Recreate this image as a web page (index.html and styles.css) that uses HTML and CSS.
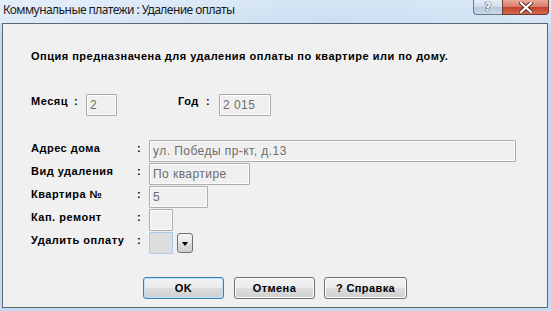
FILE: index.html
```html
<!DOCTYPE html>
<html lang="ru">

<head>
    <meta charset="UTF-8">
    <title>Коммунальные платежи : Удаление оплаты</title>
    <link rel="stylesheet" href="styles.css">
</head>

<body>
    <div class="window">
        <div class="titlebar">
            <span class="title">Коммунальные платежи : Удаление оплаты</span>
            <div class="caption-buttons">
                <span class="cap-btn help">?</span>
                <span class="cap-btn close">
                    <svg width="14" height="11" viewBox="0 0 14 11">
                        <path d="M2 1 L12 10 M12 1 L2 10" stroke="#5a2a20" stroke-width="4" stroke-linecap="square" fill="none"/>
                        <path d="M2 1 L12 10 M12 1 L2 10" stroke="#fff" stroke-width="2.2" stroke-linecap="square" fill="none"/>
                    </svg>
                </span>
            </div>
        </div>

        <div class="client">
            <p class="intro">Опция предназначена для удаления оплаты по квартире или по дому.</p>

            <div class="period">
                <span class="lbl month-lbl">Месяц</span>
                <span class="lbl colon month-colon">:</span>
                <div class="field month-field">2</div>
                <span class="lbl year-lbl">Год</span>
                <span class="lbl colon year-colon">:</span>
                <div class="field year-field">2 015</div>
            </div>

            <div class="fields">
                <span class="lbl">Адрес дома</span>
                <span class="lbl colon">:</span>
                <div class="field address-field">ул. Победы пр-кт, д.13</div>

                <span class="lbl">Вид удаления</span>
                <span class="lbl colon">:</span>
                <div class="field kind-field">По квартире</div>

                <span class="lbl">Квартира №</span>
                <span class="lbl colon">:</span>
                <div class="field flat-field">5</div>

                <span class="lbl">Кап. ремонт</span>
                <span class="lbl colon">:</span>
                <div class="field small-field"></div>

                <span class="lbl">Удалить оплату</span>
                <span class="lbl colon">:</span>
                <div class="combo">
                    <div class="field small-field focused"></div>
                    <span class="drop-btn"><span class="arrow"></span></span>
                </div>
            </div>

            <div class="actions">
                <button class="btn default">OK</button>
                <button class="btn">Отмена</button>
                <button class="btn help-btn">? Справка</button>
            </div>
        </div>
    </div>
</body>

</html>
```

FILE: styles.css
```css
* {
    margin: 0;
    padding: 0;
    box-sizing: border-box;
}

body {
    width: 551px;
    height: 311px;
    overflow: hidden;
    font-family: "Liberation Sans", Arial, sans-serif;
}

.window {
    width: 551px;
    height: 311px;
    padding: 0 3px 3px 2px;
    display: flex;
    flex-direction: column;
    background: linear-gradient(to bottom, #dbe8f6 0, #c3d8ef 40px, #c6dbf1 100%);
}

.titlebar {
    height: 23px;
    display: flex;
    justify-content: space-between;
    align-items: flex-start;
    background: linear-gradient(to right, rgba(235, 243, 252, .6), rgba(190, 215, 240, .2) 60%, rgba(220, 235, 250, .5));
    margin: 0 -3px 0 -2px;
    padding-left: 3px;
}

.title {
    font-family: "Noto Sans", "Open Sans", sans-serif;
    font-size: 12px;
    letter-spacing: -0.55px;
    line-height: 16px;
    margin-top: 2px;
    color: #1b1b1b;
}

.caption-buttons {
    display: flex;
    margin-right: 2px;
}

.cap-btn {
    height: 15px;
    display: flex;
    align-items: center;
    justify-content: center;
    border: 1px solid #6a7a8e;
    border-top: none;
}

.help {
    width: 29px;
    border-radius: 0 0 0 4px;
    border-right: none;
    background: linear-gradient(to bottom, #e4ecf5 0, #cfdbe8 50%, #b7c8da 51%, #c9d9ea 100%);
    color: #fff;
    font-family: "DejaVu Sans", sans-serif;
    font-weight: bold;
    font-size: 12px;
    line-height: 12px;
    text-shadow: 0 0 1px #3b4a5c, 0 0 1px #3b4a5c, 0 0 1px #3b4a5c;
}

.close {
    width: 47px;
    border-radius: 0 0 4px 0;
    border-color: #6e3a30;
    background: linear-gradient(to bottom, #e9a99a 0, #d77a66 50%, #c2412a 51%, #d46b4f 100%);
}

.client {
    flex: 1;
    background: #f0f0f0;
    border: 1px solid #5e6670;
    padding: 26px 0 0 28px;
    font-size: 11px;
    font-weight: bold;
    letter-spacing: 0.5px;
    color: #000;
}

.intro {
    line-height: 13px;
}

.lbl {
    line-height: 13px;
    padding-top: 1px;
    white-space: nowrap;
}

.period {
    display: flex;
    margin-top: 31px;
    height: 22px;
}

.month-lbl {
    width: 43px;
}

.month-colon {
    width: 12px;
}

.year-lbl {
    width: 28px;
    margin-left: 61px;
}

.year-colon {
    width: 13px;
}

.field {
    height: 22px;
    border: 1px solid #acacac;
    box-shadow: inset 0 0 0 1px #fbfbfb;
    background: #f0f0f0;
    color: #6d6d6d;
    font-weight: normal;
    font-size: 12px;
    letter-spacing: 0.45px;
    line-height: 14px;
    padding: 3px 0 0 3px;
    border-radius: 1px;
}

.month-field {
    width: 31px;
}

.year-field {
    width: 52px;
}

.fields {
    display: grid;
    grid-template-columns: 106px 12px 1fr;
    grid-auto-rows: 22px;
    row-gap: 1px;
    margin-top: 24px;
}

.fields .lbl {
    padding-top: 2px;
}

.address-field {
    width: 367px;
}

.kind-field {
    width: 101px;
}

.flat-field {
    width: 59px;
}

.small-field {
    width: 24px;
}

.combo {
    display: flex;
    align-items: center;
    gap: 4px;
}

.focused {
    background: #dddddd;
    border-color: #a9c9ea;
    box-shadow: none;
}

.drop-btn {
    width: 16px;
    height: 20px;
    border: 1px solid #707070;
    border-radius: 3px;
    background: linear-gradient(to bottom, #f4f4f4 0, #e8e8e8 50%, #dcdcdc 51%, #d0d0d0 100%);
    display: flex;
    align-items: center;
    justify-content: center;
}

.arrow {
    width: 0;
    height: 0;
    border-left: 3px solid transparent;
    border-right: 3px solid transparent;
    border-top: 4px solid #000;
    margin-top: 1px;
}

.actions {
    display: flex;
    gap: 10px;
    margin: 23px 0 0 112px;
}

.btn {
    width: 81px;
    height: 22px;
    border: 1px solid #707070;
    border-radius: 3px;
    background: linear-gradient(to bottom, #f2f2f2 0, #ebebeb 50%, #dddddd 51%, #cfcfcf 100%);
    box-shadow: inset 0 0 0 1px #fcfcfc;
    font-family: "Liberation Sans", Arial, sans-serif;
    font-size: 11px;
    font-weight: bold;
    letter-spacing: 0.4px;
    color: #000;
}

.btn.default {
    border-color: #3c7fb1;
    box-shadow: inset 0 0 0 1px #b8e0f8;
}

.help-btn {
    width: 83px;
    margin-left: -1px;
}
```
